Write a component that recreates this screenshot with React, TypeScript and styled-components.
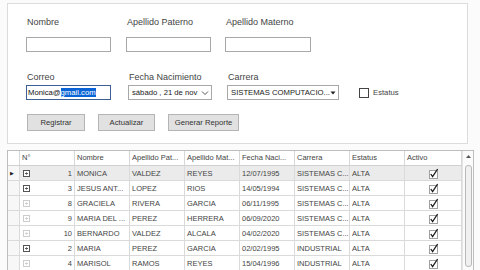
import React from 'react'
import styled, {createGlobalStyle} from 'styled-components'

type Alumno = {
    id: number
    nombre: string
    paterno: string
    materno: string
    fecha: string
    carrera: string
    estatus: string
    expanded: boolean
}

const alumnos: Alumno[] = [
    {id: 1, nombre: 'MONICA', paterno: 'VALDEZ', materno: 'REYES', fecha: '12/07/1995', carrera: 'SISTEMAS C...', estatus: 'ALTA', expanded: true},
    {id: 3, nombre: 'JESUS ANT...', paterno: 'LOPEZ', materno: 'RIOS', fecha: '14/05/1994', carrera: 'SISTEMAS C...', estatus: 'ALTA', expanded: true},
    {id: 8, nombre: 'GRACIELA', paterno: 'RIVERA', materno: 'GARCIA', fecha: '06/11/1995', carrera: 'SISTEMAS C...', estatus: 'ALTA', expanded: false},
    {id: 9, nombre: 'MARIA DEL ...', paterno: 'PEREZ', materno: 'HERRERA', fecha: '06/09/2020', carrera: 'SISTEMAS C...', estatus: 'ALTA', expanded: false},
    {id: 10, nombre: 'BERNARDO', paterno: 'VALDEZ', materno: 'ALCALA', fecha: '04/02/2020', carrera: 'SISTEMAS C...', estatus: 'ALTA', expanded: false},
    {id: 2, nombre: 'MARIA', paterno: 'PEREZ', materno: 'GARCIA', fecha: '02/02/1995', carrera: 'INDUSTRIAL', estatus: 'ALTA', expanded: true},
    {id: 4, nombre: 'MARISOL', paterno: 'RAMOS', materno: 'REYES', fecha: '15/04/1996', carrera: 'INDUSTRIAL', estatus: 'ALTA', expanded: false},
]

const columns = ['N°', 'Nombre', 'Apellido Pat...', 'Apellido Mat...', 'Fecha Naci...', 'Carrera', 'Estatus', 'Activo']

const GlobalStyle = createGlobalStyle`
  html, body {
    margin: 0;
    padding: 0;
    width: 480px;
    height: 270px;
    overflow: hidden;
    background: #fbfbfb;
    font-family: "Liberation Sans", Arial, sans-serif;
    color: #333;
  }
`

const Page = styled.div`
  padding: 3px 0 0 7px;
`

const Panel = styled.div`
  box-sizing: border-box;
  width: 461px;
  height: 141px;
  background: #fff;
  border: 1px solid #dcdcdc;
  padding: 13px 0 0 18px;
`

const FieldRow = styled.div<{ $top?: number }>`
  display: flex;
  align-items: flex-end;
  margin-top: ${p => p.$top ?? 0}px;
`

const Field = styled.div<{ $width: number; $gap: number }>`
  display: flex;
  flex-direction: column;
  width: ${p => p.$width}px;
  margin-right: ${p => p.$gap}px;
`

const Label = styled.label<{ $space: number }>`
  height: 11px;
  line-height: 11px;
  font-size: 9px;
  color: #444;
  padding-left: 1px;
  margin-bottom: ${p => p.$space}px;
  white-space: nowrap;
`

const TextBox = styled.div<{ $focus?: boolean }>`
  box-sizing: border-box;
  height: 15px;
  border: 1px solid ${p => p.$focus ? '#3c5f94' : '#a8a8a8'};
  background: #fff;
  font-size: 7.7px;
  line-height: 13px;
  padding-left: 1px;
  color: #111;
  white-space: nowrap;
  overflow: hidden;
`

const Selected = styled.span`
  background: #0a64d6;
  color: #fff;
`

const Picker = styled(TextBox)`
  display: flex;
  align-items: center;
  justify-content: space-between;
  padding: 0 2px 0 3px;
  color: #222;
`

const CheckWrap = styled.div`
  display: flex;
  align-items: center;
  height: 15px;
  font-size: 7.7px;
  color: #444;
  gap: 4px;
`

const CheckBox = styled.span`
  box-sizing: border-box;
  width: 10px;
  height: 10px;
  border: 1px solid #444;
  background: #fff;
`

const ButtonRow = styled.div`
  display: flex;
  gap: 13px;
  margin: 14px 0 0 1px;
`

const Button = styled.button<{ $width: number }>`
  box-sizing: border-box;
  width: ${p => p.$width}px;
  height: 17px;
  padding: 0;
  background: #e1e1e1;
  border: 1px solid #b4b4b4;
  font-family: "Liberation Sans", Arial, sans-serif;
  font-size: 7.7px;
  color: #333;
`

const GridFrame = styled.div`
  box-sizing: border-box;
  display: flex;
  width: 467px;
  height: 122px;
  margin-top: 6px;
  border: 1px solid #bdbdbd;
  border-bottom: none;
  background: #fff;
  overflow: hidden;
`

const Table = styled.div`
  flex: 1;
  display: grid;
  grid-template-columns: 12px repeat(7, 55px) 57px;
  grid-auto-rows: 15px;
  align-content: start;
`

const HeadCell = styled.div`
  box-sizing: border-box;
  border-right: 1px solid #d8d8d8;
  border-bottom: 1px solid #d0d0d0;
  font-size: 7.5px;
  line-height: 14px;
  padding-left: 2px;
  color: #444;
  background: #fff;
  white-space: nowrap;
  overflow: hidden;
`

const Cell = styled.div<{ $selected?: boolean; $align?: string }>`
  box-sizing: border-box;
  display: flex;
  align-items: center;
  justify-content: ${p => p.$align ?? 'flex-start'};
  border-right: 1px solid #dadada;
  border-bottom: 1px solid #dadada;
  font-size: 7.5px;
  padding: 0 2px;
  color: #444;
  background: ${p => p.$selected ? '#ebebeb' : '#fff'};
  white-space: nowrap;
  overflow: hidden;
`

const RowHead = styled(Cell)`
  padding: 0 0 0 2px;
  background: #f7f7f7;
  font-size: 5px;
  color: #222;
`

const IdCell = styled(Cell)`
  justify-content: space-between;
  padding: 0 2px 0 3px;
`

const ScrollBar = styled.div`
  width: 11px;
  display: flex;
  flex-direction: column;
  align-items: center;
  background: #fbfbfb;
  border-left: 1px solid #e4e4e4;
`

const Thumb = styled.div`
  box-sizing: border-box;
  width: 7px;
  height: 102px;
  margin-top: 2px;
  border: 1px solid #b9b9b9;
  border-radius: 3px;
  background: #f0f0f0;
`

const Expander = ({dark}: { dark: boolean }) => {
    const c = dark ? '#555' : '#cdcdcd'
    return (
        <svg width="7" height="7" viewBox="0 0 7 7">
            <rect x="0.5" y="0.5" width="6" height="6" fill="#fff" stroke={c}/>
            <line x1="2" y1="3.5" x2="5" y2="3.5" stroke={c}/>
            <line x1="3.5" y1="2" x2="3.5" y2="5" stroke={c} strokeWidth="0.6"/>
        </svg>
    )
}

const Checked = () => (
    <svg width="11" height="11" viewBox="0 0 11 11">
        <rect x="1.5" y="2.5" width="8" height="8" fill="#fff" stroke="#a0a0a0"/>
        <path d="M2.8 6 L4.6 8.6 L9.6 1" fill="none" stroke="#1a1a1a" strokeWidth="1.3"/>
    </svg>
)

const Chevron = () => (
    <svg width="8" height="6" viewBox="0 0 8 6">
        <path d="M1 1.5 L4 4.5 L7 1.5" fill="none" stroke="#444" strokeWidth="0.9"/>
    </svg>
)

const Caret = () => (
    <svg width="6" height="4" viewBox="0 0 6 4">
        <path d="M0.5 0.5 L5.5 0.5 L3 3.5 Z" fill="#222"/>
    </svg>
)

const App = () => {
    return (
        <Page>
            <GlobalStyle/>
            <Panel>
                <FieldRow>
                    <Field $width={85} $gap={15}>
                        <Label $space={9}>Nombre</Label>
                        <TextBox/>
                    </Field>
                    <Field $width={85} $gap={14}>
                        <Label $space={9}>Apellido Paterno</Label>
                        <TextBox/>
                    </Field>
                    <Field $width={86} $gap={0}>
                        <Label $space={9}>Apellido Materno</Label>
                        <TextBox/>
                    </Field>
                </FieldRow>

                <FieldRow $top={20}>
                    <Field $width={85} $gap={17}>
                        <Label $space={2}>Correo</Label>
                        <TextBox $focus>Monica@<Selected>gmail.com</Selected></TextBox>
                    </Field>
                    <Field $width={84} $gap={15}>
                        <Label $space={2}>Fecha Nacimiento</Label>
                        <Picker>sábado , 21 de nov <Chevron/></Picker>
                    </Field>
                    <Field $width={112} $gap={20}>
                        <Label $space={2}>Carrera</Label>
                        <Picker>SISTEMAS COMPUTACIO... <Caret/></Picker>
                    </Field>
                    <CheckWrap>
                        <CheckBox/>
                        <span>Estatus</span>
                    </CheckWrap>
                </FieldRow>

                <ButtonRow>
                    <Button $width={58}>Registrar</Button>
                    <Button $width={57}>Actualizar</Button>
                    <Button $width={71}>Generar Reporte</Button>
                </ButtonRow>
            </Panel>

            <GridFrame>
                <Table>
                    <HeadCell/>
                    {columns.map(c => <HeadCell key={c}>{c}</HeadCell>)}
                    {alumnos.map((a, i) => {
                        const sel = i === 0
                        return (
                            <React.Fragment key={a.id}>
                                <RowHead>{sel && '▶'}</RowHead>
                                <IdCell $selected={sel}><Expander dark={a.expanded}/>{a.id}</IdCell>
                                <Cell $selected={sel}>{a.nombre}</Cell>
                                <Cell $selected={sel}>{a.paterno}</Cell>
                                <Cell $selected={sel}>{a.materno}</Cell>
                                <Cell $selected={sel}>{a.fecha}</Cell>
                                <Cell $selected={sel}>{a.carrera}</Cell>
                                <Cell $selected={sel}>{a.estatus}</Cell>
                                <Cell $selected={sel} $align={'center'}><Checked/></Cell>
                            </React.Fragment>
                        )
                    })}
                </Table>
                <ScrollBar>
                    <svg width="7" height="12" viewBox="0 0 7 12">
                        <path d="M1 7 L3.5 4 L6 7 Z" fill="#555"/>
                    </svg>
                    <Thumb/>
                </ScrollBar>
            </GridFrame>
        </Page>
    )
}

export default App
